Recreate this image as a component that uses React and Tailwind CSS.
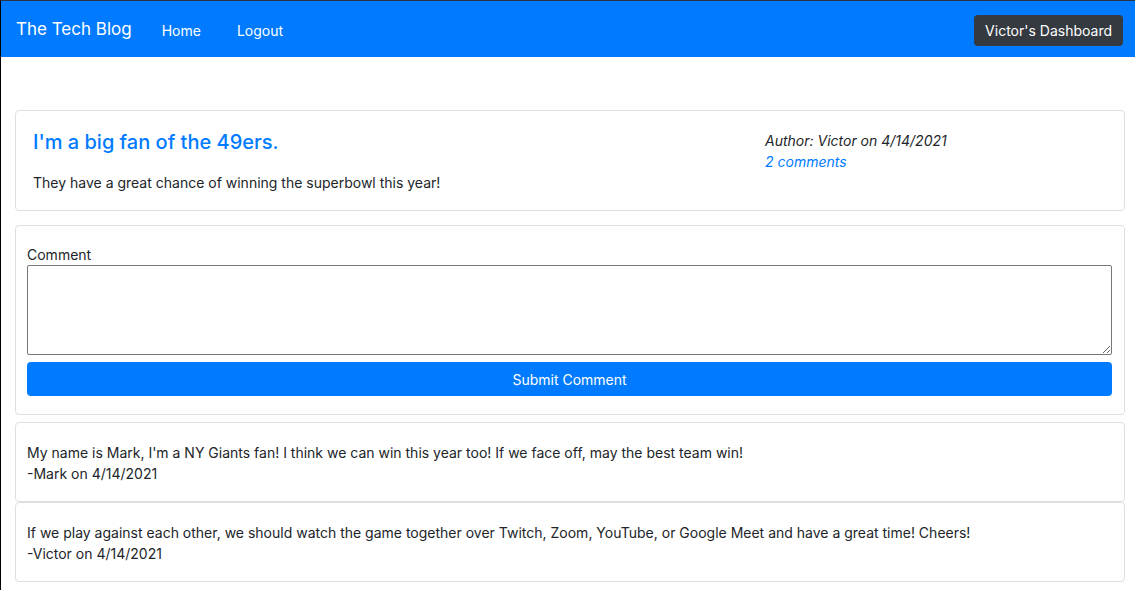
export default function App() {
  return (
    <div className="min-h-[590px] bg-white border-l border-black text-[#212529]" style={{ fontFamily: 'Inter, "Noto Sans", sans-serif' }}>
      <nav className="h-[57px] bg-[#007bff] border-t border-[#2b3440] flex items-center pt-[2px] pl-[15px] pr-[12px]">
        <span className="text-[17px] text-white mr-[30px]">The Tech Blog</span>
        <span className="text-[14px] text-white mr-[36px]">Home</span>
        <span className="text-[14px] text-white">Logout</span>
        <span className="ml-auto bg-[#343a40] text-white text-[14px] rounded-[4px] h-[31px] px-[11px] flex items-center">Victor's Dashboard</span>
      </nav>
      <div className="pl-[14px] pr-[10px] pt-[53px]">
        <div className="border border-[#dfdfdf] rounded-[4px] h-[101px] flex px-[17px] pt-[17px]">
          <div className="flex-1">
            <h5 className="text-[20px] font-medium text-[#007bff] leading-[28px]">I'm a big fan of the 49ers.</h5>
            <p className="text-[14px] mt-[16px] leading-[22px]">They have a great chance of winning the superbowl this year!</p>
          </div>
          <div className="w-[342px] pt-[2px] text-[14px] italic leading-[21px]">
            <div>Author: Victor on 4/14/2021</div>
            <div className="text-[#007bff]">2 comments</div>
          </div>
        </div>
        <div className="mt-[14px] border border-[#dfdfdf] rounded-[4px] pl-[11px] pr-[12px] pt-[19px] pb-[18px]">
          <label className="block text-[14px] leading-[20px]">Comment</label>
          <textarea className="block w-full h-[90px] border border-[#767676] rounded-[2px] resize-y"></textarea>
          <button className="mt-[7px] w-full h-[34px] bg-[#007bff] text-white text-[14px] rounded-[4px]">Submit Comment</button>
        </div>
        <div className="mt-[7px] border border-[#dfdfdf] rounded-[4px] h-[80px] px-[11px] pt-[19px] text-[14px] leading-[21px]">
          <div>My name is Mark, I'm a NY Giants fan! I think we can win this year too! If we face off, may the best team win!</div>
          <div>-Mark on 4/14/2021</div>
        </div>
        <div className="border border-[#dfdfdf] rounded-[4px] h-[80px] px-[11px] pt-[19px] text-[14px] leading-[21px]">
          <div>If we play against each other, we should watch the game together over Twitch, Zoom, YouTube, or Google Meet and have a great time! Cheers!</div>
          <div>-Victor on 4/14/2021</div>
        </div>
      </div>
    </div>
  );
}
